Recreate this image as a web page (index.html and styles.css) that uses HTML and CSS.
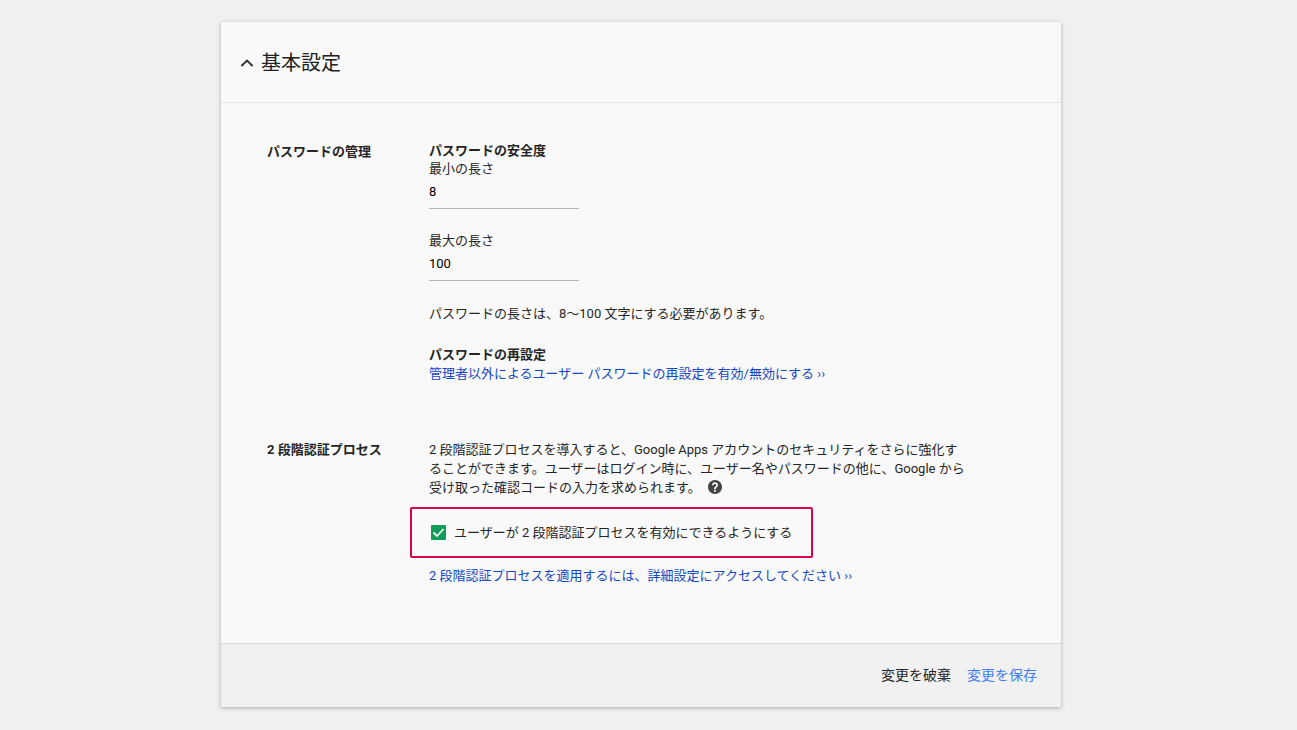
FILE: index.html
```html
<!DOCTYPE html>
<html lang="ja">
<head>
<meta charset="utf-8">
<meta name="viewport" content="width=device-width, initial-scale=1">
<title>基本設定</title>
<link rel="stylesheet" href="styles.css">
</head>
<body>
<main class="card">
  <header class="card-head">
    <h1 class="title">
      <button class="toggle" type="button" aria-expanded="true">
        <svg class="chevron" viewBox="0 0 14 10" aria-hidden="true"><path d="M1.4 8 7 2.600 12.600 8"/></svg>
        基本設定
      </button>
    </h1>
  </header>
  <form class="form">
    <div class="sections">
      <section class="section">
        <h2 class="section-label">パスワードの管理</h2>
        <div class="section-body">
          <h3 class="subhead">パスワードの安全度</h3>
          <div class="field">
            <label for="min">最小の長さ</label>
            <input class="text-input" id="min" type="text" value="8">
          </div>
          <div class="field">
            <label for="max">最大の長さ</label>
            <input class="text-input" id="max" type="text" value="100">
          </div>
          <p class="note">パスワードの長さは、8～100 文字にする必要があります。</p>
          <h3 class="subhead">パスワードの再設定</h3>
          <a class="link" href="#">管理者以外によるユーザー パスワードの再設定を有効/無効にする ››</a>
        </div>
      </section>
      <section class="section">
        <h2 class="section-label">2 段階認証プロセス</h2>
        <div class="section-body">
          <p class="text">2 段階認証プロセスを導入すると、Google Apps アカウントのセキュリティをさらに強化することができます。ユーザーはログイン時に、ユーザー名やパスワードの他に、Google から受け取った確認コードの入力を求められます。<button class="help" type="button" aria-label="ヘルプ"><svg viewBox="0 0 24 24" aria-hidden="true"><path d="M12 0C5.400 0 0 5.400 0 12s5.400 12 12 12 12-5.400 12-12S18.600 0 12 0zm1.400 20h-3v-2.900h3zm2.900-8.700-1.200 1.300c-1 1-1.700 1.600-1.700 3.300h-3v-.7c0-1.300.5-2.400 1.400-3.200l1.600-1.600c.4-.4.7-.9.7-1.500 0-1.200-.9-2.100-2.100-2.100s-2.200.9-2.200 2.100H6.900c0-2.800 2.300-5 5.100-5s5.200 2.200 5.200 4.800c0 1-.4 1.900-.9 2.600z"/></svg></button></p>
          <label class="option"><input class="check" type="checkbox" checked><span>ユーザーが 2 段階認証プロセスを有効にできるようにする</span></label>
          <a class="link" href="#">2 段階認証プロセスを適用するには、詳細設定にアクセスしてください ››</a>
        </div>
      </section>
    </div>
    <footer class="card-foot">
      <button class="action" type="reset">変更を破棄</button>
      <button class="action action-primary" type="button">変更を保存</button>
    </footer>
  </form>
</main>
</body>
</html>
```
FILE: styles.css
```css
* {
  box-sizing: border-box;
}

body {
  margin: 0;
  padding: 22px 31px 22px 16px;
  background: #f0f0f0;
  color: #262626;
  font: 13px/19px Roboto, "Noto Sans CJK JP", sans-serif;
}

button,
input {
  font: inherit;
  color: inherit;
}

button {
  padding: 0;
  border: 0;
  background: none;
  cursor: pointer;
}

h1,
h2,
h3,
p {
  margin: 0;
  font-size: inherit;
}

.card {
  max-width: 840px;
  margin: 0 auto;
  background: #f9f9f9;
  box-shadow: 0 1px 4px rgba(0, 0, 0, 0.28);
}

.card-head {
  padding: 26px 19px 24px;
  border-bottom: 1px solid #e2e2e2;
}

.title {
  font-size: 20px;
  font-weight: 400;
  line-height: 30px;
}

.toggle {
  display: flex;
  align-items: center;
  gap: 7px;
  color: #212121;
}

.chevron {
  width: 14px;
  height: 10px;
  fill: none;
  stroke: #333;
  stroke-width: 2;
}

.sections {
  display: grid;
  gap: 57px;
  padding: 39px 45px 58px 46px;
}

.section {
  display: grid;
  grid-template-columns: 162px minmax(0, 540px);
}

.section-label,
.subhead {
  font-weight: 700;
}

.subhead,
.field {
  line-height: 18px;
}

.field + .field,
.note {
  margin-top: 23px;
}

.note {
  margin-bottom: 23px;
}

.field {
  display: grid;
  justify-items: start;
}

.text-input {
  width: 150px;
  max-width: 100%;
  height: 31px;
  padding: 4px 0 8px;
  border: 0;
  border-bottom: 1px solid #b5b5b5;
  border-radius: 0;
  background: none;
  color: #000;
}

.link {
  display: block;
  color: #1546c4;
  text-decoration: none;
}

.help {
  width: 14px;
  height: 14px;
  margin-left: 7px;
  vertical-align: -2px;
}

.help svg {
  display: block;
  fill: #444;
}

.option {
  display: flex;
  align-items: center;
  gap: 8px;
  width: fit-content;
  margin: 10px 0 8px -19px;
  padding: 14px 19px;
  border: 2px solid #dc0050;
  border-radius: 2px;
}

.check {
  flex: none;
  width: 15px;
  height: 15px;
  margin: 0;
  appearance: none;
  border-radius: 1px;
  background: #0f9d58 url("data:image/svg+xml,%3Csvg xmlns='http://www.w3.org/2000/svg' viewBox='0 0 15 15'%3E%3Cpath d='M2.500 7.500 6 11 12.500 4' fill='none' stroke='white' stroke-width='1.800'/%3E%3C/svg%3E") center / contain;
}

.card-foot {
  display: flex;
  justify-content: flex-end;
  gap: 16px;
  padding: 22px 24px;
  border-top: 1px solid #d9d9d9;
  background: #f1f1f1;
}

.action {
  font-size: 14px;
}

.action-primary {
  color: #427df5;
}
```
